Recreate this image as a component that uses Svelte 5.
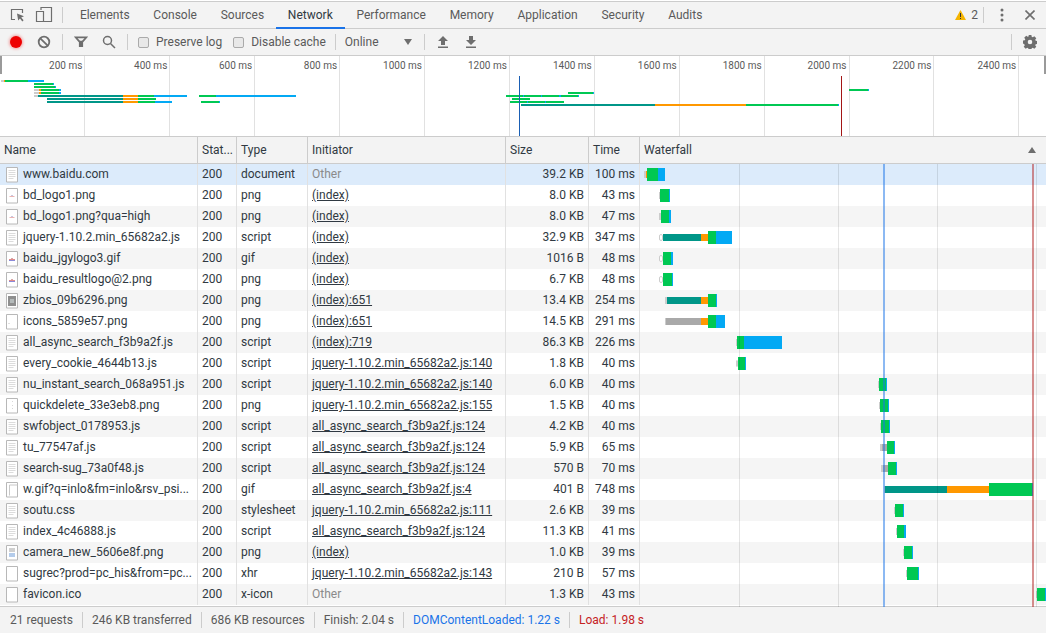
<script lang="ts">
	type Seg = [string, number, number];
	type Req = { name: string; status: number; type: string; init: string; link: boolean; size: string; time: string; icon: string; segs: Seg[] };

	const tabs = ['Elements', 'Console', 'Sources', 'Network', 'Performance', 'Memory', 'Application', 'Security', 'Audits'];

	// waterfall segments use page x coordinates; thin kinds are drawn at half height
	const requests: Req[] = [
		{ name: 'www.baidu.com', status: 200, type: 'document', init: 'Other', link: false, size: '39.2 KB', time: '100 ms', icon: 'doc', segs: [['stub', 644, 646], ['wait', 645.5, 647], ['recv', 647, 658], ['dl', 658, 665]] },
		{ name: 'bd_logo1.png', status: 200, type: 'png', init: '(index)', link: true, size: '8.0 KB', time: '43 ms', icon: 'img', segs: [['stub', 659, 660], ['recv', 660, 669], ['dl', 669, 670]] },
		{ name: 'bd_logo1.png?qua=high', status: 200, type: 'png', init: '(index)', link: true, size: '8.0 KB', time: '47 ms', icon: 'img', segs: [['stub', 659, 661], ['recv', 661, 669], ['dl', 669, 671]] },
		{ name: 'jquery-1.10.2.min_65682a2.js', status: 200, type: 'script', init: '(index)', link: true, size: '32.9 KB', time: '347 ms', icon: 'doc', segs: [['box', 659, 663], ['conn', 663, 701], ['wait', 701, 708], ['recv', 708, 716], ['dl', 716, 732]] },
		{ name: 'baidu_jgylogo3.gif', status: 200, type: 'gif', init: '(index)', link: true, size: '1016 B', time: '48 ms', icon: 'logo', segs: [['box', 659, 663], ['recv', 663, 671], ['dl', 671, 673]] },
		{ name: 'baidu_resultlogo@2.png', status: 200, type: 'png', init: '(index)', link: true, size: '6.7 KB', time: '48 ms', icon: 'logo', segs: [['box', 659, 663], ['recv', 663, 672], ['dl', 672, 673]] },
		{ name: 'zbios_09b6296.png', status: 200, type: 'png', init: '(index):651', link: true, size: '13.4 KB', time: '254 ms', icon: 'sprite', segs: [['stub', 665, 667], ['conn', 667, 701], ['wait', 701, 708], ['recv', 708, 716], ['dl', 716, 717]] },
		{ name: 'icons_5859e57.png', status: 200, type: 'png', init: '(index):651', link: true, size: '14.5 KB', time: '291 ms', icon: 'faint', segs: [['stub', 665, 666], ['queue', 666, 701], ['wait', 701, 708], ['recv', 708, 716], ['dl', 716, 725]] },
		{ name: 'all_async_search_f3b9a2f.js', status: 200, type: 'script', init: '(index):719', link: true, size: '86.3 KB', time: '226 ms', icon: 'doc', segs: [['stub', 736, 737], ['recv', 737, 744], ['dl', 744, 782]] },
		{ name: 'every_cookie_4644b13.js', status: 200, type: 'script', init: 'jquery-1.10.2.min_65682a2.js:140', link: true, size: '1.8 KB', time: '40 ms', icon: 'doc', segs: [['box', 736, 738], ['recv', 738, 745], ['dl', 745, 746]] },
		{ name: 'nu_instant_search_068a951.js', status: 200, type: 'script', init: 'jquery-1.10.2.min_65682a2.js:140', link: true, size: '6.0 KB', time: '40 ms', icon: 'doc', segs: [['stub', 878, 879], ['recv', 879, 886], ['dl', 886, 887]] },
		{ name: 'quickdelete_33e3eb8.png', status: 200, type: 'png', init: 'jquery-1.10.2.min_65682a2.js:155', link: true, size: '1.5 KB', time: '40 ms', icon: 'dots', segs: [['stub', 879, 880], ['recv', 880, 888], ['dl', 888, 889]] },
		{ name: 'swfobject_0178953.js', status: 200, type: 'script', init: 'all_async_search_f3b9a2f.js:124', link: true, size: '4.2 KB', time: '40 ms', icon: 'doc', segs: [['stub', 880, 881], ['recv', 881, 889], ['dl', 889, 890]] },
		{ name: 'tu_77547af.js', status: 200, type: 'script', init: 'all_async_search_f3b9a2f.js:124', link: true, size: '5.9 KB', time: '65 ms', icon: 'doc', segs: [['stub', 880, 882], ['queue', 882, 887], ['recv', 887, 894], ['dl', 894, 895]] },
		{ name: 'search-sug_73a0f48.js', status: 200, type: 'script', init: 'all_async_search_f3b9a2f.js:124', link: true, size: '570 B', time: '70 ms', icon: 'doc', segs: [['stub', 881, 883], ['queue', 883, 888], ['recv', 888, 896], ['dl', 896, 897]] },
		{ name: 'w.gif?q=inlo&fm=inlo&rsv_psi...', status: 200, type: 'gif', init: 'all_async_search_f3b9a2f.js:4', link: true, size: '401 B', time: '748 ms', icon: 'frame', segs: [['stub', 884, 885], ['conn', 885, 947], ['wait', 947, 989], ['recv', 989, 1032], ['dl', 1032, 1033]] },
		{ name: 'soutu.css', status: 200, type: 'stylesheet', init: 'jquery-1.10.2.min_65682a2.js:111', link: true, size: '2.6 KB', time: '39 ms', icon: 'doc', segs: [['stub', 894, 895], ['recv', 895, 903], ['dl', 903, 904]] },
		{ name: 'index_4c46888.js', status: 200, type: 'script', init: 'all_async_search_f3b9a2f.js:124', link: true, size: '11.3 KB', time: '41 ms', icon: 'doc', segs: [['stub', 896, 897], ['recv', 897, 904], ['dl', 904, 906]] },
		{ name: 'camera_new_5606e8f.png', status: 200, type: 'png', init: '(index)', link: true, size: '1.0 KB', time: '39 ms', icon: 'camera', segs: [['stub', 903, 904], ['recv', 904, 912], ['dl', 912, 913]] },
		{ name: 'sugrec?prod=pc_his&from=pc...', status: 200, type: 'xhr', init: 'jquery-1.10.2.min_65682a2.js:143', link: true, size: '210 B', time: '57 ms', icon: 'blank', segs: [['stub', 906, 907], ['recv', 907, 918], ['dl', 918, 919]] },
		{ name: 'favicon.ico', status: 200, type: 'x-icon', init: 'Other', link: false, size: '1.3 KB', time: '43 ms', icon: 'blank', segs: [['stub', 1036, 1037], ['recv', 1037, 1045], ['dl', 1045, 1046]] },
	];

	const ticks = [200, 400, 600, 800, 1000, 1200, 1400, 1600, 1800, 2000, 2200, 2400];

	// overview bars: y, then segments in page x
	const overview: [number, Seg[]][] = [
		[80, [['stub', 1, 4], ['wait', 4, 5], ['recv', 5, 28], ['dl', 28, 44]]],
		[83, [['recv', 34, 53], ['dl', 53, 54]]],
		[86, [['recv', 34, 55], ['dl', 55, 56]]],
		[89, [['stub', 34, 39], ['wait', 39, 41], ['recv', 41, 59], ['dl', 59, 61], ['recv', 849, 868], ['dl', 868, 869]]],
		[92, [['stub', 34, 39], ['wait', 39, 41], ['recv', 41, 59], ['dl', 59, 61], ['recv', 568, 593], ['dl', 593, 594]]],
		[95, [['stub', 34, 38], ['conn', 38, 123], ['wait', 123, 138], ['recv', 138, 154], ['dl', 154, 187], ['recv', 199, 216], ['dl', 216, 296], ['recv', 506, 523], ['dl', 523, 524], ['recv', 524, 541], ['dl', 541, 542], ['recv', 542, 559], ['dl', 559, 561], ['recv', 561, 578], ['dl', 578, 579]]],
		[98, [['conn', 47, 123], ['wait', 123, 138], ['recv', 138, 156], ['recv', 512, 530]]],
		[101, [['conn', 47, 123], ['wait', 123, 138], ['recv', 138, 155], ['dl', 155, 172], ['recv', 201, 219], ['dl', 219, 220], ['recv', 510, 527], ['dl', 527, 528], ['recv', 528, 545], ['dl', 545, 546], ['recv', 546, 564]]],
		[104, [['conn', 521, 655], ['wait', 655, 746], ['recv', 746, 838], ['dl', 838, 839]]],
	];
</script>

{#snippet fileIcon(kind: string)}
	<svg class="file" width="13" height="16" viewBox="0 0 13 16">
		<path d="M.5.5h11v14.500H.5z" fill="#fff" stroke="#b8b8b8" />
		{#if kind === 'doc'}
			<path d="M2.500 3.500h7M2.500 5.500h7M2.500 7.500h7M2.500 9.500h7M2.500 11.500h5" stroke="#dcdcdc" fill="none" />
		{:else if kind === 'img'}
			<path d="M3.500 8.500h5" stroke="#eab4b4" fill="none" />
			<path d="M5 7.500h2" stroke="#c8c8e0" fill="none" />
		{:else if kind === 'logo'}
			<path d="M3 8h6v1H3z" fill="#e08a8a" />
			<path d="M3 9h6v1H3z" fill="#8a8ad8" />
			<path d="M5 7h2v1H5z" fill="#d8a8a8" />
		{:else if kind === 'sprite'}
			<path d="M2 3h8v10H2z" fill="#8f8f8f" />
			<path d="M4 6h4v4H4z" fill="#b4baba" />
		{:else if kind === 'camera'}
			<path d="M3 3h6v4H3z" fill="#d0d0d0" />
			<path d="M3 8h6v4H3z" fill="#b4cceb" />
		{:else if kind === 'faint'}
			<path d="M2 9h2v1H2z" fill="#e0e0e0" />
		{:else if kind === 'dots'}
			<path d="M6 3h1v1H6zM6 7h1v1H6zM6 10h1v1H6z" fill="#d8d8d8" />
		{:else if kind === 'frame'}
			<path d="M3.500 3v10.500M3.500 3h8" stroke="#c8c8c8" fill="none" />
		{/if}
	</svg>
{/snippet}

<div class="devtools">
	<div class="tabbar">
		<button class="ico first" aria-label="Select element">
			<svg width="18" height="18" viewBox="0 0 18 18" fill="none" stroke="#6e6e6e" stroke-width="1.200">
				<path d="M6 13.500H2.500v-10h11V7" />
				<path d="M8 7.500l7 2.800-2.800 1.200 2.400 2.800-1.300 1.100-2.300-2.800-1.800 2z" fill="#6e6e6e" stroke="none" />
			</svg>
		</button>
		<button class="ico" aria-label="Device toolbar">
			<svg width="18" height="18" viewBox="0 0 18 18" fill="none" stroke="#6e6e6e" stroke-width="1.200">
				<path d="M6 4V1.500h10.500v14H9" />
				<path d="M1.500 5.500H8.500v10H1.500z" />
			</svg>
		</button>
		<span class="sep tabsep"></span>
		<div class="tabs">
			{#each tabs as t}
				<span class="tab" class:active={t === 'Network'}>{t}</span>
			{/each}
		</div>
		<div class="right">
			<svg width="11" height="10" viewBox="0 0 11 10"><path d="M5.500 0L11 10H0z" fill="#f4b400" /><path d="M5 3h1v4H5zM5 8h1v1H5z" fill="#333" /></svg>
			<span class="warn">2</span>
			<span class="sep"></span>
			<svg class="more" width="4" height="14" viewBox="0 0 4 14" fill="#6e6e6e"><circle cx="2" cy="2" r="1.500" /><circle cx="2" cy="7" r="1.500" /><circle cx="2" cy="12" r="1.500" /></svg>
			<svg class="close" width="10" height="10" viewBox="0 0 10 10" stroke="#6e6e6e" stroke-width="1.600"><path d="M.5.5l9 9M9.500.5l-9 9" /></svg>
		</div>
	</div>

	<div class="toolbar">
		<span class="record"></span>
		<svg class="clear" width="14" height="14" viewBox="0 0 14 14" fill="none" stroke="#6e6e6e" stroke-width="1.800"><circle cx="7" cy="7" r="5.300" /><path d="M3.300 3.300l7.400 7.400" /></svg>
		<span class="sep s1"></span>
		<svg class="filter" width="14" height="12" viewBox="0 0 14 12" fill="#6e6e6e" stroke="#6e6e6e" stroke-width="1.200"><path d="M1 1h12L8.500 6v4.500h-3V6z" /><path d="M3.500 2.200h7L8 4.800H6z" fill="#f3f3f3" stroke="none" /></svg>
		<svg class="search" width="14" height="14" viewBox="0 0 14 14" fill="none" stroke="#6e6e6e" stroke-width="1.500"><circle cx="5.500" cy="5.500" r="4" /><path d="M8.500 8.500l4.500 4.500" /></svg>
		<span class="sep s2"></span>
		<label class="check"><span class="box"></span>Preserve log</label>
		<label class="check"><span class="box"></span>Disable cache</label>
		<span class="sep s3"></span>
		<span class="online">Online</span>
		<span class="caret"></span>
		<span class="sep s4"></span>
		<svg class="arrow" width="10" height="12" viewBox="0 0 10 12" fill="#6e6e6e"><path d="M5 0l5 5H7v4H3V5H0zM0 10.500h10V12H0z" /></svg>
		<svg class="arrow a2" width="10" height="12" viewBox="0 0 10 12" fill="#6e6e6e"><path d="M3 0h4v4h3L5 9 0 4h3zM0 10.500h10V12H0z" /></svg>
		<div class="right">
			<span class="sep"></span>
			<svg class="gear" width="14" height="14" viewBox="0 0 14 14"><path fill="#6e6e6e" fill-rule="evenodd" d="M5.600 0h2.800l.3 1.800 1.100.5L11.300 1.200l2 2-1.100 1.500.5 1.100 1.800.3v2.800l-1.800.3-.5 1.100 1.100 1.500-2 2-1.500-1.100-1.100.5-.3 1.800H5.600l-.3-1.800-1.100-.5-1.500 1.100-2-2 1.100-1.500-.5-1.100L0 8.400V5.600l1.800-.3.500-1.100L1.200 2.700l2-2 1.500 1.100 1.100-.5zM7 4.700a2.300 2.300 0 100 4.600 2.300 2.300 0 000-4.600z" /></svg>
		</div>
	</div>

	<div class="overview">
		{#each ticks as t, i}
			<span class="tick" style="left: {84.4 + 84.9 * i}px"><span>{t} ms</span></span>
		{/each}
		<span class="handle left"></span>
		<span class="handle rt"></span>
		{#each overview as [y, segs]}
			{#each segs as [k, a, b]}
				<span class="ov {k}" style="left: {a}px; width: {b - a}px; top: {y - 56}px"></span>
			{/each}
		{/each}
		<span class="mark dcl"></span>
		<span class="mark load"></span>
	</div>

	<div class="grid-wrap">
		<div class="row head">
			<div class="cell name">Name</div>
			<div class="cell">Stat...</div>
			<div class="cell">Type</div>
			<div class="cell">Initiator</div>
			<div class="cell">Size</div>
			<div class="cell">Time</div>
			<div class="cell wf">Waterfall<span class="sort"></span></div>
		</div>
		{#each requests as r, i}
			<div class="row" class:selected={i === 0} class:odd={i % 2 === 0}>
				<div class="cell name">{@render fileIcon(r.icon)}<span class="label">{r.name}</span></div>
				<div class="cell">{r.status}</div>
				<div class="cell">{r.type}</div>
				<div class="cell init" class:link={r.link}><span>{r.init}</span></div>
				<div class="cell num">{r.size}</div>
				<div class="cell num">{r.time}</div>
				<div class="cell wf">
					{#each r.segs as [k, a, b]}
						<span class="seg {k}" style="left: {a - 640}px; width: {b - a}px"></span>
					{/each}
				</div>
			</div>
		{/each}
		<div class="lines">
			<span class="gl" style="left: 99px"></span>
			<span class="gl" style="left: 198px"></span>
			<span class="gl" style="left: 297px"></span>
			<span class="gl" style="left: 396px"></span>
			<span class="vl blue"></span>
			<span class="vl red"></span>
		</div>
		<div class="pad"></div>
	</div>

	<div class="status">
		<span>21 requests</span>
		<span>246 KB transferred</span>
		<span>686 KB resources</span>
		<span>Finish: 2.04 s</span>
		<span class="dom">DOMContentLoaded: 1.22 s</span>
		<span class="loaded">Load: 1.98 s</span>
	</div>
</div>

<style>
	:global(body) {
		margin: 0;
		background: #fff;
	}

	.devtools {
		width: 1046px;
		height: 633px;
		overflow: hidden;
		font-family: Roboto, sans-serif;
		font-size: 12px;
		color: #303942;
		display: flex;
		flex-direction: column;
	}

	.tabbar {
		height: 26px;
		margin-top: 1px;
		border-top: 1px solid #ccc;
		border-bottom: 1px solid #ccc;
		background: #f3f3f3;
		display: flex;
		align-items: center;
		flex: none;
	}

	.ico {
		border: 0;
		background: none;
		padding: 0;
		width: 18px;
		height: 18px;
		margin-left: 8px;
		display: flex;
	}
	.ico.first { margin-left: 9px; }

	.sep {
		display: block;
		width: 1px;
		height: 16px;
		background: #ccc;
		flex: none;
	}
	.tabsep { margin-left: 9px; }

	.tabs {
		display: flex;
		height: 100%;
		margin-left: 5px;
	}

	.tab {
		padding: 0 11.880px;
		line-height: 26px;
		color: #5a5a5a;
		box-sizing: border-box;
	}
	.tab.active {
		color: #303942;
		box-shadow: inset 0 -2px 0 #1a73e8;
		height: 27px;
	}

	.right {
		margin-left: auto;
		display: flex;
		align-items: center;
	}

	.warn {
		margin-left: 5px;
		margin-right: 5px;
		color: #5a5a5a;
	}
	.more { margin-left: 16px; }
	.close { margin: 0 11px 0 21px; }

	.toolbar {
		height: 26px;
		border-bottom: 1px solid #ccc;
		background: #f3f3f3;
		display: flex;
		align-items: center;
		flex: none;
		color: #5a5a5a;
	}

	.record {
		width: 12px;
		height: 12px;
		border-radius: 50%;
		background: #ee0000;
		box-shadow: 0 0 3px 1px #f2a0a0;
		margin-left: 10px;
	}
	.clear { margin-left: 15px; }
	.s1 { margin-left: 11px; }
	.filter { margin-left: 11px; }
	.search { margin-left: 14px; }
	.s2 { margin-left: 11px; }

	.check {
		display: flex;
		align-items: center;
		margin-left: 10px;
	}
	.check + .check { margin-left: 11px; }
	.box {
		width: 9px;
		height: 9px;
		border: 1px solid #aaa;
		border-radius: 2px;
		background: #e8e8e8;
		margin-right: 7px;
	}
	.s3 { margin-left: 9px; }
	.online { margin-left: 9px; }
	.caret {
		width: 0;
		height: 0;
		border-left: 4px solid transparent;
		border-right: 4px solid transparent;
		border-top: 6px solid #6e6e6e;
		margin-left: 25px;
	}
	.s4 { margin-left: 12px; }
	.arrow { margin-left: 13px; }
	.a2 { margin-left: 18px; }
	.gear { margin: 0 9px 0 11px; }

	.overview {
		position: relative;
		height: 80px;
		border-bottom: 1px solid #ccc;
		background: #fff;
		flex: none;
		overflow: hidden;
		font-size: 10px;
		color: #5a5a5a;
	}

	.tick {
		position: absolute;
		top: 0;
		bottom: 0;
		width: 1px;
		background: #e1e1e1;
	}
	.tick span {
		position: absolute;
		right: 3px;
		top: 4px;
		white-space: nowrap;
	}

	.handle {
		position: absolute;
		top: 0;
		width: 2px;
		height: 18px;
		background: #9a9a9a;
	}
	.handle.left { left: 0; }
	.handle.rt { right: 0; }

	.ov {
		position: absolute;
		height: 2px;
	}

	.mark {
		position: absolute;
		top: 20px;
		bottom: 0;
		width: 1px;
	}
	.mark.dcl { left: 519px; background: #1a5fb4; }
	.mark.load { left: 841px; background: #a31515; }

	.grid-wrap {
		position: relative;
		flex: 1;
		display: flex;
		flex-direction: column;
		min-height: 0;
	}

	.row {
		display: grid;
		grid-template-columns: 198px 39px 71px 198px 83px 51px 1fr;
		height: 21px;
		flex: none;
		line-height: 21px;
		background: #fff;
	}
	.row.odd { background: #f5f5f5; }
	.row.selected { background: #dcebfb; }

	.row.head {
		height: 27px;
		line-height: 26px;
		background: #f3f3f3;
		border-bottom: 1px solid #ccc;
		box-sizing: border-box;
		color: #303942;
	}

	.cell {
		border-right: 1px solid #e1e1e1;
		padding: 0 4px;
		white-space: nowrap;
		overflow: hidden;
		box-sizing: border-box;
	}
	.head .cell { border-right-color: #ccc; }

	.cell.name {
		display: flex;
		align-items: center;
		padding-left: 6px;
	}
	.head .cell.name { padding-left: 4px; }
	.file { flex: none; }
	.label { margin-left: 4px; }

	.init { color: #8a8a8a; }
	.init.link { color: #303942; }
	.init.link span { text-decoration: underline; }

	.num { text-align: right; }

	.cell.wf {
		position: relative;
		border-right: 0;
		overflow: visible;
	}

	.sort {
		position: absolute;
		right: 10px;
		top: 10px;
		border-left: 4px solid transparent;
		border-right: 4px solid transparent;
		border-bottom: 6px solid #6e6e6e;
	}

	.seg {
		position: absolute;
		top: 4px;
		height: 13px;
	}
	.seg.stub {
		top: 7px;
		height: 7px;
		background: #ccc;
	}
	.seg.box {
		top: 7px;
		height: 7px;
		box-sizing: border-box;
		border: 1px solid #ccc;
		background: #fff;
	}
	.seg.queue, .seg.conn, .seg.wait {
		top: 7px;
		height: 7px;
	}

	.queue { background: #a9a9a9; }
	.conn { background: #009688; }
	.wait { background: #ff9800; }
	.recv { background: #00c853; }
	.dl { background: #03a9f4; }
	.ov.stub { background: #ccc; }

	.lines {
		position: absolute;
		left: 640px;
		right: 0;
		top: 27px;
		height: 443px;
		pointer-events: none;
	}
	.gl {
		position: absolute;
		top: 0;
		bottom: 0;
		width: 1px;
		background: rgba(0, 0, 0, 0.1);
	}
	.vl {
		position: absolute;
		top: 0;
		bottom: 0;
		width: 2px;
	}
	.vl.blue { left: 243px; background: rgba(26, 115, 232, 0.5); }
	.vl.red { left: 392px; background: rgba(178, 34, 34, 0.5); }

	.pad { flex: 1; }

	.status {
		height: 26px;
		border-top: 1px solid #ccc;
		background: #f3f3f3;
		display: flex;
		align-items: center;
		flex: none;
		color: #5a5a5a;
		padding-left: 1px;
	}
	.status span {
		padding: 0 9px;
		line-height: 16px;
		border-left: 1px solid #ccc;
	}
	.status span:first-child { border-left: 0; }
	.status .dom { color: #1a73e8; }
	.status .loaded { color: #c5221f; }
</style>
